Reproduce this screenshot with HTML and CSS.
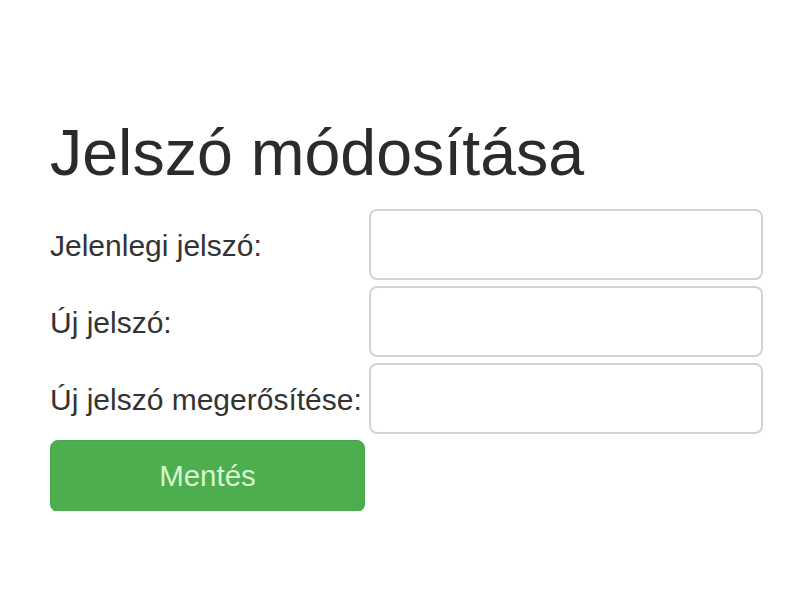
FILE: index.html
```html
<!DOCTYPE html>
<html lang="hu">
<head>
<meta charset="utf-8">
<title>Jelszó módosítása</title>
<link rel="stylesheet" href="styles.css">
</head>
<body>
<main class="page">
  <h1 class="title">Jelszó módosítása</h1>
  <form class="form">
    <label class="label" for="cur">Jelenlegi jelszó:</label>
    <input class="input" id="cur" type="password">
    <label class="label" for="new">Új jelszó:</label>
    <input class="input" id="new" type="password">
    <label class="label" for="conf">Új jelszó megerősítése:</label>
    <input class="input" id="conf" type="password">
    <button class="btn" type="button">Mentés</button>
  </form>
</main>
</body>
</html>
```

FILE: styles.css
```css
html, body {
  margin: 0;
  padding: 0;
  background: #ffffff;
}

.page {
  padding: 118px 0 0 50px;
  font-family: "Liberation Sans", Arial, sans-serif;
  color: #333333;
}

.title {
  margin: 0 0 21px 0;
  font-size: 64.5px;
  line-height: 70px;
  font-weight: normal;
  color: #2b2b2b;
}

.form {
  display: grid;
  grid-template-columns: 319px 394px;
  grid-auto-rows: 71px;
  row-gap: 6px;
  align-items: center;
}

.label {
  font-size: 30px;
  line-height: 34px;
  padding-top: 2px;
  color: #333333;
  white-space: nowrap;
}

.input {
  box-sizing: border-box;
  height: 71px;
  width: 394px;
  margin: 0;
  border: 2px solid #d3d3d3;
  border-radius: 8px;
  background: #ffffff;
  outline: none;
}

.btn {
  box-sizing: border-box;
  align-self: start;
  height: 72px;
  width: 315px;
  margin: 0;
  border: 1px solid #47a447;
  border-radius: 8px;
  background: #4cae4f;
  color: #d8f7cc;
  font-family: "Liberation Sans", Arial, sans-serif;
  font-size: 29.5px;
  padding: 0;
}
```
